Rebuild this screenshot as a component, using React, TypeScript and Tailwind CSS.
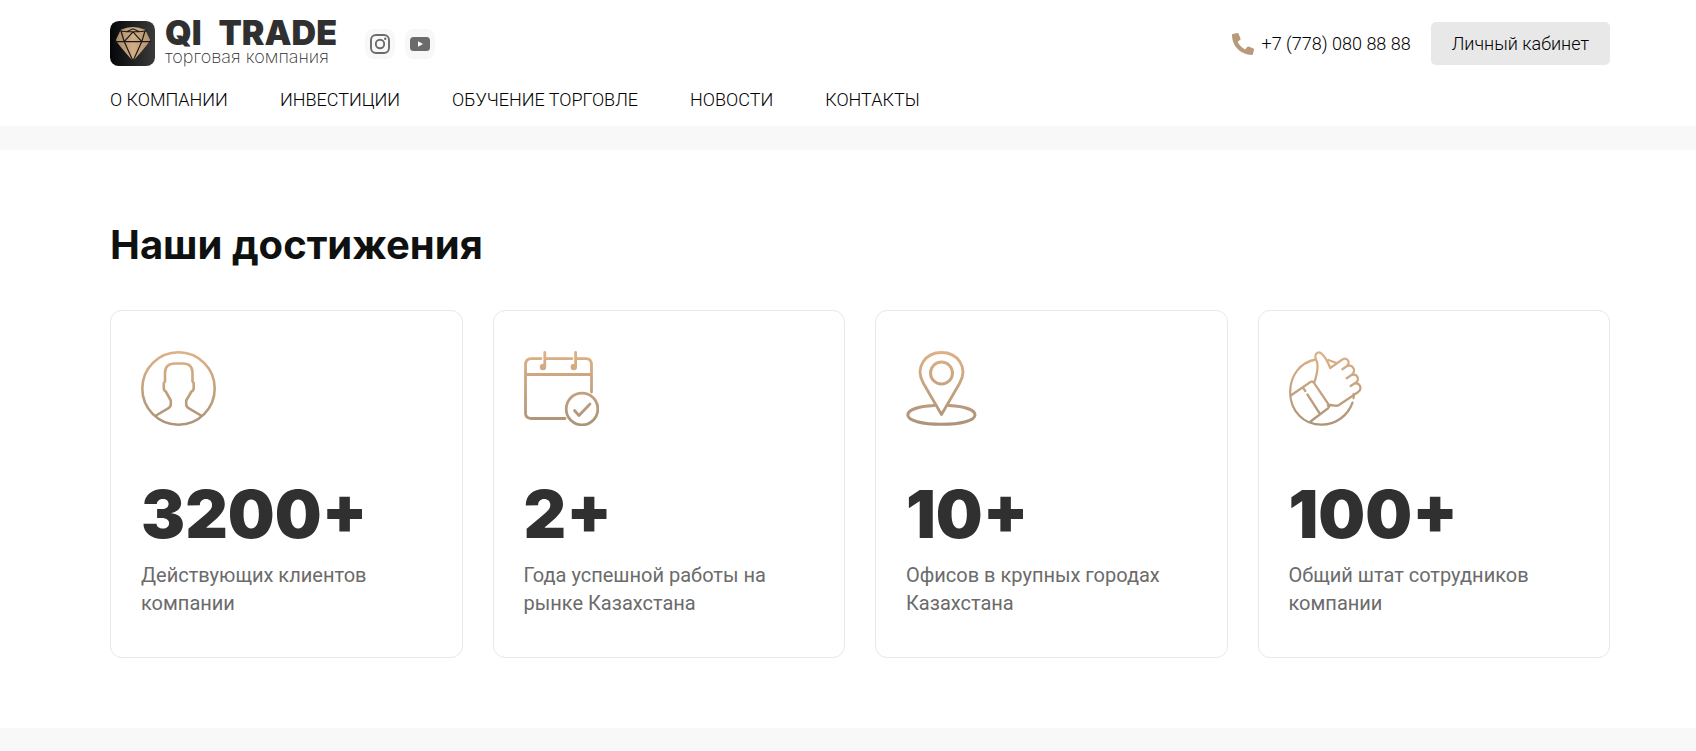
import React from "react";
import { FaPhoneAlt } from "react-icons/fa";

const navItems = ["О КОМПАНИИ", "ИНВЕСТИЦИИ", "ОБУЧЕНИЕ ТОРГОВЛЕ", "НОВОСТИ", "КОНТАКТЫ"];

function Gradient({ id }: { id: string }) {
  return (
    <defs>
      <linearGradient id={id} gradientUnits="userSpaceOnUse" x1="0" y1="0" x2="0" y2="75">
        <stop offset="0" stopColor="#deb186" />
        <stop offset="1" stopColor="#ac9378" />
      </linearGradient>
    </defs>
  );
}

function Icon({ id, children }: { id: string; children: React.ReactNode }) {
  return (
    <svg
      className="size-[75px]"
      viewBox="0 0 75 75"
      fill="none"
      stroke={`url(#${id})`}
      strokeLinecap="round"
      strokeLinejoin="round"
      aria-hidden="true"
    >
      <Gradient id={id} />
      {children}
    </svg>
  );
}

function PersonIcon() {
  return (
    <Icon id="person">
      <circle cx="37.5" cy="37.5" r="36.2" strokeWidth="2.6" />
      <path
        strokeWidth="2.6"
        d="M15 64.5 L27.5 57.2 Q29.8 55.8 29.8 53 V49.5 L24.8 40.5 Q22.8 39.8 22.8 37 V32 L24 30.5 V22 Q24 12.5 34 12.5 H42 Q51.5 12.5 51.5 22 V30.5 L52.7 32 V37 Q52.7 39.8 50.5 40.5 L45.2 49.5 V53 Q45.2 55.8 47.5 57.2 L60 64.5"
      />
    </Icon>
  );
}

function CalendarIcon() {
  return (
    <Icon id="calendar">
      <path
        strokeWidth="2.8"
        d="M41 67.5 H7 Q1.5 67.5 1.5 62 V14 Q1.5 7.6 7.5 7.6 H17 M21 7.6 H48 M52 7.6 H62 Q67.5 7.6 67.5 14 V41 M1.5 23.5 H67.5 M20.8 1.5 V15 M51.6 1.5 V15"
      />
      <circle cx="19" cy="16" r="2" strokeWidth="2.4" fill="url(#calendar)" />
      <circle cx="49.8" cy="16" r="2" strokeWidth="2.4" fill="url(#calendar)" />
      <circle cx="58" cy="58" r="15.8" strokeWidth="2.8" />
      <path strokeWidth="2.8" d="M50.5 59.5 L55 64.5 L66 53" />
    </Icon>
  );
}

function PinIcon() {
  return (
    <Icon id="pin">
      <path
        strokeWidth="2.8"
        d="M35.5 63.5 L17.5 32.5 C8 16 20 1.5 35.5 1.5 S63 16 53.5 32.5 Z"
      />
      <circle cx="35.5" cy="22" r="11" strokeWidth="3" />
      <path strokeWidth="3" d="M28 54.6 C12 55.5 1.8 59 1.8 64 C1.8 69.5 16 73.3 35.5 73.3 S69 69.5 69 64 C69 59 59 55.5 43 54.6" />
    </Icon>
  );
}

function ThumbIcon() {
  return (
    <Icon id="thumb">
      <g strokeWidth="2.3" transform="scale(0.97 1)">
        <path d="M27.5 8.5 C11 11.5 1.2 25 1.2 41 C1.2 60 15 73.7 33.5 73.7 C49 73.7 61 64 65.5 51.5 M40.5 9 L49 12 M66.5 43 Q67 44.5 66.5 47" />
        <path d="M1.8 44.5 L22.5 30.8 Q24.3 30 25.6 31.7 L41.3 54.2 Q41.8 56 40.3 57.2 L22.5 70.2 M26 32 C29 23 30.5 15 28.5 10 C25 3.5 29.5 0 33 2.2 C37.5 6 40.5 12 42.5 17 L55 8.5 C60.5 5.5 63.5 12 59.5 15.2 L55 18.2 M59.5 15.2 C67 12.5 69.5 21.5 64 24.2 L59.5 27.2 M64 24.2 C71 21.8 73.5 29.5 68 32.3 L63.5 35 M67.5 32.5 C74 31.5 75.5 38.5 71 41.2 L51.5 54 C47.5 56.5 44 52.5 40 54.5 M15 37.5 L16.8 40 M19 43.5 L31 61.5" />
      </g>
    </Icon>
  );
}

function LogoMark() {
  return (
    <svg className="size-[45px] shrink-0" viewBox="0 0 46 46" aria-hidden="true">
      <defs>
        <linearGradient id="tile" x1="0" y1="0" x2="1" y2="0">
          <stop offset="0" stopColor="#050608" />
          <stop offset="1" stopColor="#3a3a3a" />
        </linearGradient>
        <linearGradient id="gem" x1="0" y1="0" x2="1" y2="0">
          <stop offset="0" stopColor="#a98967" />
          <stop offset="0.5" stopColor="#d2ad85" />
          <stop offset="1" stopColor="#b3926e" />
        </linearGradient>
      </defs>
      <rect width="46" height="46" rx="9" fill="url(#tile)" />
      <path d="M11 9 Q23.5 3.5 36 9 L41 19.5 Q39 24 23.5 41 Q8 24 6 19.5 Z" fill="url(#gem)" />
      <path
        d="M9 10 L17 11 L23.5 8 L30 11 L38 10 M17 11 H30 M11 9.5 L14.5 21 L23.5 11 L32.5 21 L36 9.5 M5 21 H42 M14.5 21 L23.5 41 L32.5 21"
        fill="none"
        stroke="#17181a"
        strokeWidth="1.2"
      />
    </svg>
  );
}

const stats = [
  { icon: <PersonIcon />, value: "3200+", label: "Действующих клиентов компании" },
  { icon: <CalendarIcon />, value: "2+", label: "Года успешной работы на рынке Казахстана" },
  { icon: <PinIcon />, value: "10+", label: "Офисов в крупных городах Казахстана" },
  { icon: <ThumbIcon />, value: "100+", label: "Общий штат сотрудников компании" },
];

export default function App() {
  return (
    <div className="min-h-screen bg-[#f8f8f8] font-['Roboto',sans-serif] text-black">
      <header className="bg-white pt-[21px] pr-[86px] pb-3 pl-[110px]">
        <div className="flex h-[45px] items-center justify-between">
          <div className="flex items-center">
            <a href="#" className="flex items-center gap-[10px] font-['Inter',sans-serif] text-[#303030]">
              <LogoMark />
              <span className="flex w-[172px] flex-col">
                <span className="flex justify-between text-[34px] leading-[26px] font-black whitespace-nowrap">
                  <span>QI</span>
                  <span>TRADE</span>
                </span>
                <span className="text-lg leading-[22px] font-extralight whitespace-nowrap">торговая компания</span>
              </span>
            </a>
            <div className="ml-7 flex gap-[10px]">
              <a href="#" aria-label="Instagram" className="flex size-[30px] items-center justify-center rounded-lg bg-[#f8f8f8]">
                <svg className="size-5" viewBox="0 0 20 20" fill="none" stroke="#6b6b6b" strokeWidth="1.9" aria-hidden="true">
                  <rect x="1" y="1" width="18" height="18" rx="5" />
                  <circle cx="10" cy="10" r="4.2" />
                  <circle cx="15.2" cy="4.8" r="1.2" fill="#6b6b6b" stroke="none" />
                </svg>
              </a>
              <a href="#" aria-label="YouTube" className="flex size-[30px] items-center justify-center rounded-lg bg-[#f8f8f8]">
                <svg className="size-5" viewBox="0 0 20 20" aria-hidden="true">
                  <rect y="3" width="20" height="14" rx="3.5" fill="#6b6b6b" />
                  <path d="M8 7.2 L13 10 L8 12.8 Z" fill="#fff" />
                </svg>
              </a>
            </div>
          </div>
          <div className="flex items-center gap-5">
            <a href="tel:+77780808888" className="flex items-center gap-2 text-lg font-light whitespace-nowrap">
              <FaPhoneAlt className="size-[22px] text-[#b89a7b]" aria-hidden="true" />
              +7 (778) 080 88 88
            </a>
            <button type="button" className="h-[43px] rounded-[5px] bg-[#e8e8e8] px-[21px] text-lg font-light whitespace-nowrap">
              Личный кабинет
            </button>
          </div>
        </div>
        <nav className="mt-5 flex gap-[52px] text-lg leading-7 font-light">
          {navItems.map((item) => (
            <a key={item} href="#" className="whitespace-nowrap">{item}</a>
          ))}
        </nav>
      </header>

      <main className="mt-6 bg-white pt-[70px] pr-[86px] pb-[70px] pl-[110px]">
        <h1 className="font-['Inter',sans-serif] text-[40px] leading-[50px] font-bold text-[#0f1110]">Наши достижения</h1>
        <div className="mt-10 grid grid-cols-4 gap-[30px]">
          {stats.map((s) => (
            <section key={s.value} className="rounded-xl border border-[#e8e8e8] px-[30px] py-10">
              {s.icon}
              <p className="mt-12 font-['Inter',sans-serif] text-[66px] leading-20 font-black text-[#303030]">{s.value}</p>
              <p className="mt-[7px] text-xl leading-7 text-[#6b6b6b]">{s.label}</p>
            </section>
          ))}
        </div>
      </main>
    </div>
  );
}
